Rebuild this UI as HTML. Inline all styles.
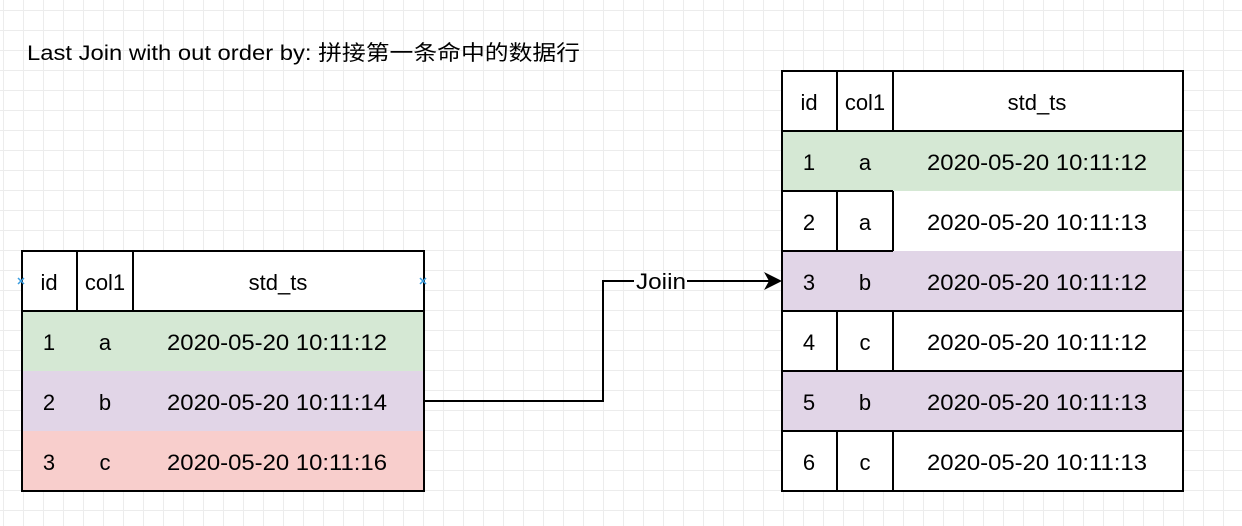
<!DOCTYPE html>
<html><head><meta charset="utf-8"><style>
html,body{margin:0;padding:0;background:#fff;}
svg{display:block;}
text{font-family:"Liberation Sans","Noto Sans CJK SC",sans-serif;font-size:22px;fill:#000;}
</style></head><body>
<svg width="1242" height="526" xmlns="http://www.w3.org/2000/svg">
<defs>
<pattern id="g" x="3" y="10" width="20" height="20" patternUnits="userSpaceOnUse">
<path d="M0 0.5H20M0.5 0V20" stroke="#ececec" stroke-width="1" fill="none"/>
</pattern>
</defs>
<rect width="1242" height="526" fill="url(#g)"/>
<text x="27" y="60" textLength="553" lengthAdjust="spacingAndGlyphs" style="font-size:21px">Last Join with out order by: 拼接第一条命中的数据行</text>

<!-- left table -->
<rect x="22" y="251" width="402" height="60" fill="#fff"/>
<rect x="22" y="311" width="402" height="60" fill="#d5e8d4"/>
<rect x="22" y="371" width="402" height="60" fill="#e1d5e7"/>
<rect x="22" y="431" width="402" height="60" fill="#f8cecc"/>
<g stroke="#000" stroke-width="2" fill="none">
<rect x="22" y="251" width="402" height="240"/>
<line x1="22" y1="311" x2="424" y2="311"/>
<line x1="77" y1="251" x2="77" y2="311"/>
<line x1="133" y1="251" x2="133" y2="311"/>
</g>
<g stroke="#3a9de0" stroke-width="1.5">
<path d="M18 278l6 6M24 278l-6 6M420 278l6 6M426 278l-6 6"/>
</g>
<g text-anchor="middle">
<text x="49" y="290">id</text><text x="105" y="290">col1</text><text x="278" y="290">std_ts</text>
<text x="49" y="350">1</text><text x="105" y="350">a</text><text x="277" y="350" textLength="220" lengthAdjust="spacingAndGlyphs">2020-05-20 10:11:12</text>
<text x="49" y="410">2</text><text x="105" y="410">b</text><text x="277" y="410" textLength="220" lengthAdjust="spacingAndGlyphs">2020-05-20 10:11:14</text>
<text x="49" y="470">3</text><text x="105" y="470">c</text><text x="277" y="470" textLength="220" lengthAdjust="spacingAndGlyphs">2020-05-20 10:11:16</text>
</g>

<!-- connector -->
<path d="M424 401H603V281H634M687 281H772" stroke="#000" stroke-width="2" fill="none"/>
<path d="M782 281L764 272L769 281L764 290Z" fill="#000"/>
<text x="661" y="289" text-anchor="middle" textLength="50" lengthAdjust="spacingAndGlyphs">Joiin</text>

<!-- right table -->
<rect x="782" y="71" width="401" height="420" fill="#fff"/>
<rect x="782" y="131" width="401" height="60" fill="#d5e8d4"/>
<rect x="782" y="251" width="401" height="60" fill="#e1d5e7"/>
<rect x="782" y="371" width="401" height="60" fill="#e1d5e7"/>
<g stroke="#000" stroke-width="2" fill="none">
<rect x="782" y="71" width="401" height="420"/>
<line x1="782" y1="131" x2="1183" y2="131"/>
<line x1="837" y1="71" x2="837" y2="131"/>
<line x1="893" y1="71" x2="893" y2="131"/>
<line x1="782" y1="191" x2="893" y2="191"/>
<line x1="782" y1="251" x2="893" y2="251"/>
<line x1="837" y1="191" x2="837" y2="251"/>
<line x1="893" y1="191" x2="893" y2="251"/>
<line x1="782" y1="311" x2="1183" y2="311"/>
<line x1="782" y1="371" x2="1183" y2="371"/>
<line x1="837" y1="311" x2="837" y2="371"/>
<line x1="893" y1="311" x2="893" y2="371"/>
<line x1="782" y1="431" x2="1183" y2="431"/>
<line x1="837" y1="431" x2="837" y2="491"/>
<line x1="893" y1="431" x2="893" y2="491"/>
</g>
<g text-anchor="middle">
<text x="809" y="110">id</text><text x="865" y="110">col1</text><text x="1037" y="110">std_ts</text>
<text x="809" y="170">1</text><text x="865" y="170">a</text><text x="1037" y="170" textLength="220" lengthAdjust="spacingAndGlyphs">2020-05-20 10:11:12</text>
<text x="809" y="230">2</text><text x="865" y="230">a</text><text x="1037" y="230" textLength="220" lengthAdjust="spacingAndGlyphs">2020-05-20 10:11:13</text>
<text x="809" y="290">3</text><text x="865" y="290">b</text><text x="1037" y="290" textLength="220" lengthAdjust="spacingAndGlyphs">2020-05-20 10:11:12</text>
<text x="809" y="350">4</text><text x="865" y="350">c</text><text x="1037" y="350" textLength="220" lengthAdjust="spacingAndGlyphs">2020-05-20 10:11:12</text>
<text x="809" y="410">5</text><text x="865" y="410">b</text><text x="1037" y="410" textLength="220" lengthAdjust="spacingAndGlyphs">2020-05-20 10:11:13</text>
<text x="809" y="470">6</text><text x="865" y="470">c</text><text x="1037" y="470" textLength="220" lengthAdjust="spacingAndGlyphs">2020-05-20 10:11:13</text>
</g>
</svg>
</body></html>
